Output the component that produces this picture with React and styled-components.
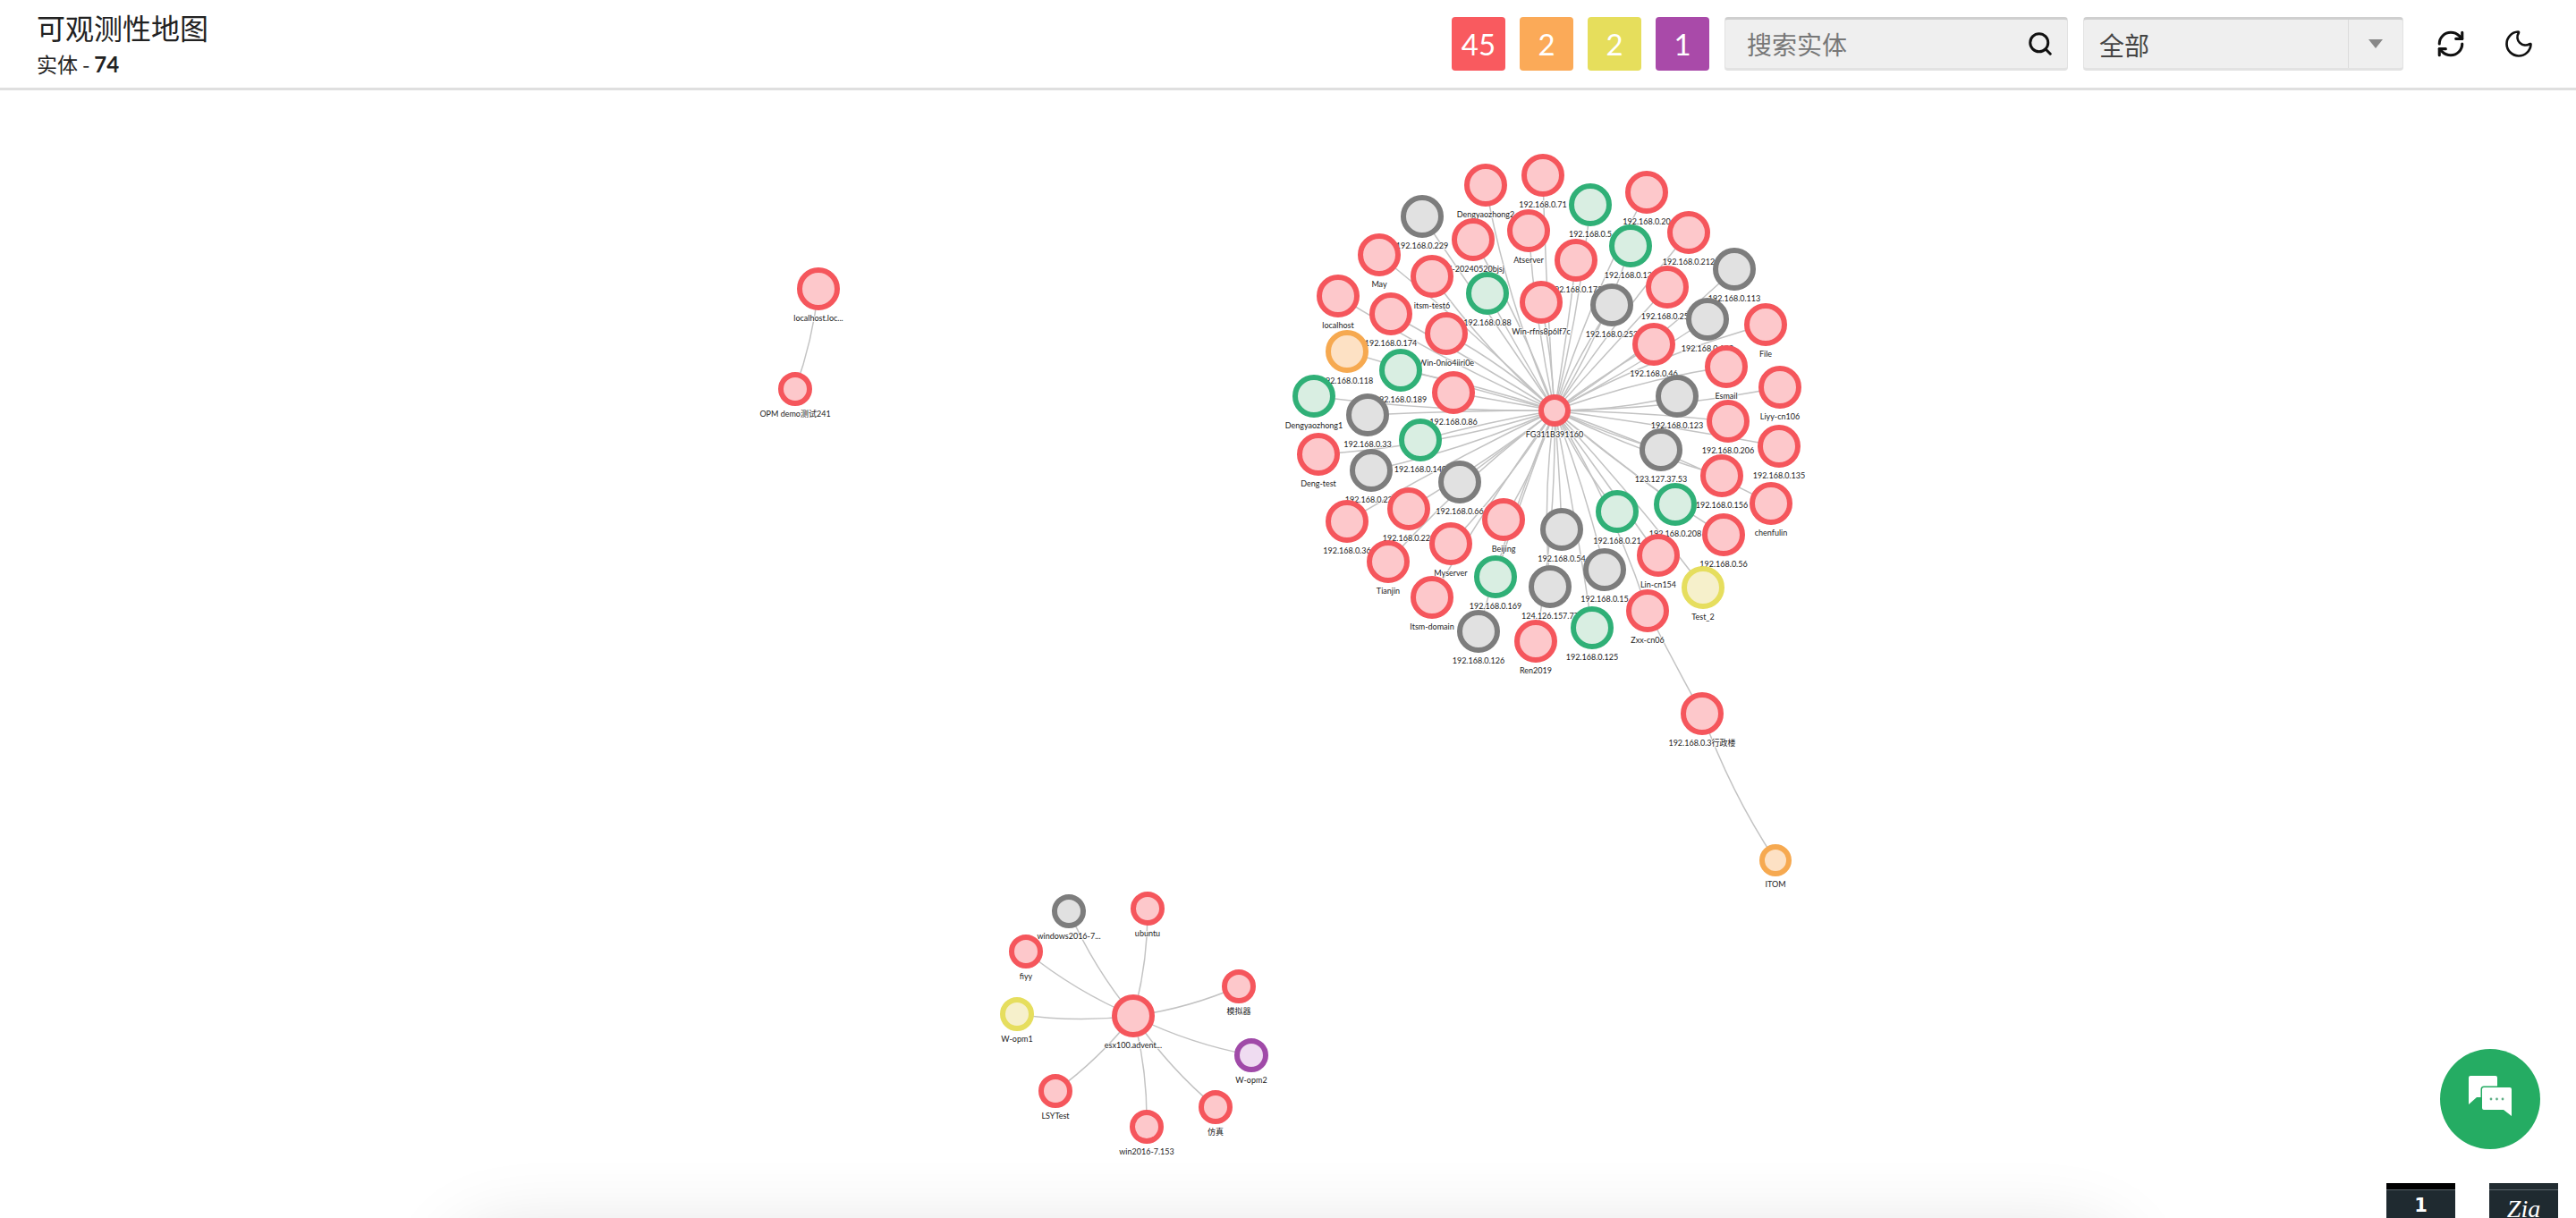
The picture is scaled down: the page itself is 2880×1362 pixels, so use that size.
import React from 'react'
import styled, { createGlobalStyle } from 'styled-components'
import { Search, RefreshCw, Moon } from 'lucide-react'

const COLORS = {
  red: ['#f5565c', '#fdc8cb'],
  green: ['#30b077', '#d9eee2'],
  gray: ['#7d7d7d', '#e1e1e1'],
  orange: ['#f6a950', '#fde1c4'],
  yellow: ['#e6de5e', '#f6f0cb'],
  purple: ['#a04aa8', '#efdcf1'],
}

// [label, x, y, status]
const RING = [
  ['Dengyaozhong2', 1661, 207, 'red'],
  ['192.168.0.71', 1725, 196, 'red'],
  ['192.168.0.5', 1778, 229, 'green'],
  ['192.168.0.20', 1841, 215, 'red'],
  ['192.168.0.229', 1590, 242, 'gray'],
  ['PC-20240520bjsj', 1647, 268, 'red'],
  ['Atserver', 1709, 258, 'red'],
  ['192.168.0.173', 1762, 291, 'red'],
  ['192.168.0.133', 1823, 275, 'green'],
  ['192.168.0.212', 1888, 260, 'red'],
  ['May', 1542, 285, 'red'],
  ['itsm-test6', 1601, 309, 'red'],
  ['192.168.0.88', 1663, 328, 'green'],
  ['Win-rfns8p6lf7c', 1723, 338, 'red'],
  ['192.168.0.253', 1802, 341, 'gray'],
  ['192.168.0.251', 1864, 321, 'red'],
  ['192.168.0.113', 1939, 301, 'gray'],
  ['localhost', 1496, 331, 'red'],
  ['192.168.0.174', 1555, 351, 'red'],
  ['Win-0nio4iiri0e', 1617, 373, 'red'],
  ['192.168.0.46', 1849, 385, 'red'],
  ['192.168.0.100', 1909, 357, 'gray'],
  ['File', 1974, 363, 'red'],
  ['192.168.0.118', 1506, 393, 'orange'],
  ['192.168.0.189', 1566, 414, 'green'],
  ['Esmail', 1930, 410, 'red'],
  ['192.168.0.86', 1625, 439, 'red'],
  ['Liyy-cn106', 1990, 433, 'red'],
  ['Dengyaozhong1', 1469, 443, 'green'],
  ['192.168.0.33', 1529, 464, 'gray'],
  ['192.168.0.123', 1875, 443, 'gray'],
  ['192.168.0.206', 1932, 471, 'red'],
  ['192.168.0.140', 1588, 492, 'green'],
  ['Deng-test', 1474, 508, 'red'],
  ['192.168.0.135', 1989, 499, 'red'],
  ['123.127.37.53', 1857, 503, 'gray'],
  ['192.168.0.225', 1533, 526, 'gray'],
  ['192.168.0.66', 1632, 539, 'gray'],
  ['192.168.0.156', 1925, 532, 'red'],
  ['chenfulin', 1980, 563, 'red'],
  ['192.168.0.208', 1873, 564, 'green'],
  ['192.168.0.21', 1808, 572, 'green'],
  ['192.168.0.223', 1575, 569, 'red'],
  ['192.168.0.36', 1506, 583, 'red'],
  ['Beijing', 1681, 581, 'red'],
  ['192.168.0.54', 1746, 592, 'gray'],
  ['192.168.0.56', 1927, 598, 'red'],
  ['Myserver', 1622, 608, 'red'],
  ['Lin-cn154', 1854, 621, 'red'],
  ['Tianjin', 1552, 628, 'red'],
  ['192.168.0.15', 1794, 637, 'gray'],
  ['192.168.0.169', 1672, 645, 'green'],
  ['124.126.157.77', 1733, 656, 'gray'],
  ['Test_2', 1904, 657, 'yellow'],
  ['Itsm-domain', 1601, 668, 'red'],
  ['Zxx-cn06', 1842, 683, 'red'],
  ['192.168.0.125', 1780, 702, 'green'],
  ['192.168.0.126', 1653, 706, 'gray'],
  ['Ren2019', 1717, 717, 'red'],
]

const HUB = { label: 'FG311B391160', x: 1738, y: 459, r: 18, status: 'red' }
const ESX = { label: 'esx100.advent...', x: 1267, y: 1136, r: 24, status: 'red' }

const SPOKES = [
  ['windows2016-7...', 1195, 1019, 'gray'],
  ['ubuntu', 1283, 1016, 'red'],
  ['fiyy', 1147, 1064, 'red'],
  ['模拟器', 1385, 1103, 'red'],
  ['W-opm1', 1137, 1134, 'yellow'],
  ['W-opm2', 1399, 1180, 'purple'],
  ['LSYTest', 1180, 1220, 'red'],
  ['仿真', 1359, 1238, 'red'],
  ['win2016-7.153', 1282, 1260, 'red'],
]

const toNode = ([label, x, y, status], r) => ({ label, x, y, status, r })

const ringNodes = RING.map((n) => toNode(n, 24))
const spokeNodes = SPOKES.map((n) => toNode(n, 19))

const CAMPUS = { label: '192.168.0.3行政楼', x: 1903, y: 798, r: 24, status: 'red' }
const ITOM = { label: 'ITOM', x: 1985, y: 962, r: 18, status: 'orange' }
const ZXX = ringNodes.find((n) => n.label === 'Zxx-cn06')
const LOCAL = { label: 'localhost.loc...', x: 915, y: 323, r: 24, status: 'red' }
const OPM = { label: 'OPM demo测试241', x: 889, y: 435, r: 19, status: 'red' }

const NODES = [HUB, ESX, CAMPUS, ITOM, LOCAL, OPM, ...ringNodes, ...spokeNodes]
  .sort((a, b) => a.y - b.y)

const EDGES = [
  ...ringNodes.map((n, i) => [HUB, n, (((i * 37) % 11) - 5) * 0.012]),
  ...spokeNodes.map((n, i) => [ESX, n, i % 2 ? 0.07 : -0.07]),
  [ZXX, CAMPUS, 0.01],
  [CAMPUS, ITOM, 0.06],
  [LOCAL, OPM, -0.06],
]

const edgePath = ([a, b, bend]) => {
  const mx = (a.x + b.x) / 2 - (b.y - a.y) * bend
  const my = (a.y + b.y) / 2 + (b.x - a.x) * bend
  return `M${a.x} ${a.y}Q${mx} ${my} ${b.x} ${b.y}`
}

const GlobalStyle = createGlobalStyle`
  html, body {
    margin: 0;
    background: #fff;
    font-family: "Lato", "Noto Sans CJK SC", sans-serif;
  }
`

const Page = styled.div`
  position: relative;
  width: 2880px;
  height: 1362px;
  overflow: hidden;
  display: flex;
  flex-direction: column;
`

const Header = styled.header`
  box-sizing: border-box;
  height: 101px;
  flex: none;
  padding: 0 44px 0 41px;
  display: flex;
  align-items: center;
  justify-content: space-between;
  border-bottom: 3px solid #dfdfdf;
`

const Titles = styled.div`
  display: flex;
  flex-direction: column;
  gap: 5px;
  color: #222;
  margin-top: -3px;
`

const Title = styled.div`
  font-family: "Noto Sans CJK SC", sans-serif;
  font-size: 32px;
  line-height: 42px;
`

const Subtitle = styled.div`
  font-family: "Noto Sans CJK SC", sans-serif;
  font-size: 23px;
  line-height: 30px;
  b {
    font-family: "Lato", sans-serif;
    font-size: 24px;
    font-weight: 700;
  }
`

const Toolbar = styled.div`
  display: flex;
  align-items: center;
`

const Badges = styled.div`
  display: flex;
  gap: 16px;
  margin-right: 17px;
`

const Badge = styled.div`
  width: 60px;
  height: 60px;
  border-radius: 4px;
  background: ${(p) => p.$color};
  color: #fff;
  font-size: 33px;
  display: flex;
  align-items: center;
  justify-content: center;
`

const Field = styled.div`
  box-sizing: border-box;
  height: 60px;
  width: ${(p) => p.$width}px;
  display: flex;
  align-items: center;
  background: #efefef;
  border: 1px solid #e2e2e2;
  border-top: 3px solid #cfcfcf;
  border-bottom: 3px solid #e2e2e2;
  border-radius: 4px;
  font-family: "Noto Sans CJK SC", sans-serif;
  font-size: 28px;
`

const SearchField = styled(Field)`
  padding: 0 15px 0 24px;
  justify-content: space-between;
  margin-right: 17px;
  color: #777;
`

const SelectField = styled(Field)`
  padding-left: 17px;
  color: #444;
`

const SelectText = styled.span`
  flex: 1;
  padding-top: 2px;
`

const Caret = styled.div`
  align-self: stretch;
  width: 60px;
  border-left: 1px solid #dcdcdc;
  display: flex;
  align-items: center;
  justify-content: center;
  &::after {
    content: '';
    border-left: 8px solid transparent;
    border-right: 8px solid transparent;
    border-top: 10px solid #888;
  }
`

const IconButton = styled.button`
  width: 40px;
  height: 40px;
  padding: 0;
  margin-left: ${(p) => p.$gap}px;
  border: none;
  background: none;
  color: #111;
  display: flex;
  align-items: center;
  justify-content: center;
`

const Canvas = styled.svg`
  display: block;
  flex: 1;
  width: 2880px;
`

const Edge = styled.path`
  fill: none;
  stroke: #c3c3c3;
  stroke-width: 1.5;
`

const Ring = styled.circle`
  fill: ${(p) => COLORS[p.$status][1]};
  stroke: ${(p) => COLORS[p.$status][0]};
  stroke-width: 6;
`

const Label = styled.text`
  font-family: "Lato", "Noto Sans CJK SC", sans-serif;
  font-size: 9px;
  fill: #222;
  text-anchor: middle;
  stroke: rgba(255, 255, 255, 0.8);
  stroke-width: 2px;
  paint-order: stroke;
`

const ChatButton = styled.button`
  position: absolute;
  left: 2728px;
  top: 1173px;
  width: 112px;
  height: 112px;
  padding: 0;
  border: none;
  border-radius: 50%;
  background: #25ac63;
  display: flex;
  align-items: center;
  justify-content: center;
`

const DockShadow = styled.div`
  position: absolute;
  left: 520px;
  width: 1840px;
  top: 1392px;
  height: 80px;
  border-radius: 40px;
  box-shadow: 0 0 90px 10px rgba(0, 0, 0, 0.14);
`

const Thumb = styled.div`
  position: absolute;
  left: ${(p) => p.$left}px;
  top: 1323px;
  width: 77px;
  height: 39px;
  box-sizing: border-box;
  background: #1f2a30;
  border-top: 7px solid ${(p) => p.$bar};
  color: #fff;
  display: flex;
  justify-content: center;
  &::before {
    content: '';
    position: absolute;
    left: 0;
    right: 0;
    top: 0;
    height: 1px;
    background: #5a646a;
  }
`

const ThumbDigit = styled.span`
  font-family: "DejaVu Sans", sans-serif;
  font-weight: 700;
  font-size: 21px;
  line-height: 36px;
`

const ThumbScript = styled.span`
  font-family: "Liberation Serif", serif;
  font-style: italic;
  font-size: 28px;
  line-height: 44px;
`

const ChatIcon = () => (
  <svg width="60" height="60" viewBox="0 0 60 60">
    <path fill="#fff" d="M6 6a2 2 0 0 1 2-2h28a2 2 0 0 1 2 2v22H15L6 36Z" />
    <path
      fill="#fff"
      stroke="#25ac63"
      strokeWidth="3"
      paintOrder="stroke"
      d="M23 17h29a2 2 0 0 1 2 2v30l-9-7H23a2 2 0 0 1-2-2V19a2 2 0 0 1 2-2Z"
    />
    <circle cx="31" cy="30" r="1.4" fill="#5fae86" />
    <circle cx="37.5" cy="30" r="1.4" fill="#5fae86" />
    <circle cx="44" cy="30" r="1.4" fill="#5fae86" />
  </svg>
)

const App = () => (
  <Page>
    <GlobalStyle />
    <Header>
      <Titles>
        <Title>可观测性地图</Title>
        <Subtitle>实体 - <b>74</b></Subtitle>
      </Titles>
      <Toolbar>
        <Badges>
          <Badge $color="#f95a5f">45</Badge>
          <Badge $color="#fbaa58">2</Badge>
          <Badge $color="#e6de5c">2</Badge>
          <Badge $color="#a94aa9">1</Badge>
        </Badges>
        <SearchField $width={384}>
          <span>搜索实体</span>
          <Search size={30} color="#111" strokeWidth={2.4} />
        </SearchField>
        <SelectField $width={358}>
          <SelectText>全部</SelectText>
          <Caret />
        </SelectField>
        <IconButton $gap={33}><RefreshCw size={34} strokeWidth={2.2} /></IconButton>
        <IconButton $gap={36}><Moon size={36} strokeWidth={1.8} /></IconButton>
      </Toolbar>
    </Header>

    <Canvas viewBox="0 101 2880 1261" height="1261">
      {EDGES.map((e, i) => <Edge key={i} d={edgePath(e)} />)}
      {NODES.map((n) => (
        <g key={n.label}>
          <Ring cx={n.x} cy={n.y} r={n.r - 3} $status={n.status} />
          <Label x={n.x} y={n.y + n.r + 12}>{n.label}</Label>
        </g>
      ))}
    </Canvas>

    <DockShadow />
    <ChatButton><ChatIcon /></ChatButton>
    <Thumb $left={2668} $bar="#000"><ThumbDigit>1</ThumbDigit></Thumb>
    <Thumb $left={2783} $bar="#222c31"><ThumbScript>Zia</ThumbScript></Thumb>
  </Page>
)

export default App
